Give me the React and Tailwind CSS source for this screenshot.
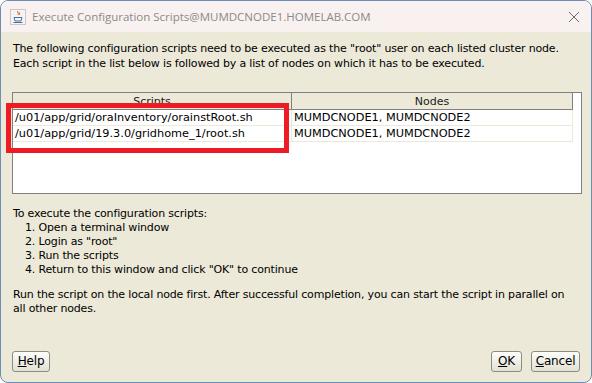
const rows = [
  ['/u01/app/grid/oraInventory/orainstRoot.sh', 'MUMDCNODE1, MUMDCNODE2'],
  ['/u01/app/grid/19.3.0/gridhome_1/root.sh', 'MUMDCNODE1, MUMDCNODE2'],
];

const steps = [
  'Open a terminal window',
  'Login as "root"',
  'Run the scripts',
  'Return to this window and click "OK" to continue',
];

function JavaIcon() {
  return (
    <svg width="16" height="16" viewBox="0 0 16 16">
      <rect x="0.5" y="0.5" width="15" height="15" fill="#f4f4f4" stroke="#c8c8c8" />
      <path d="M8 2c-1.5 1.5 1.5 2.5 0 4M9.5 3c-1 1 1 1.5 0 3" stroke="#e0701a" strokeWidth="1" fill="none" />
      <path d="M4 8.5h8l-1 3.5H5z" fill="none" stroke="#4a6fa5" strokeWidth="1" />
      <path d="M3.5 13.5h9" stroke="#4a6fa5" strokeWidth="1" />
    </svg>
  );
}

function Button({ children, className = '' }) {
  return (
    <button
      className={`h-[21px] rounded-[3px] border border-[#8c8c80] bg-gradient-to-b from-[#fdfdfb] to-[#e3e1d4] text-[12px] text-black ${className}`}
    >
      {children}
    </button>
  );
}

export default function App() {
  return (
    <div className="w-[592px] h-[383px] overflow-hidden rounded-[8px] border border-[#6d8fb6] bg-[#ece9d8] flex flex-col font-['DejaVu_Sans',sans-serif]">
      {/* title bar */}
      <div className="h-[31px] shrink-0 bg-[#f9f1ef] flex items-center pl-[9px] pr-[10px]">
        <JavaIcon />
        <span className="ml-[6px] text-[11.5px] text-[#8a8a8a] font-['Open_Sans',sans-serif]">
          Execute Configuration Scripts@MUMDCNODE1.HOMELAB.COM
        </span>
        <svg className="ml-auto mr-[1px]" width="12" height="12" viewBox="0 0 12 12">
          <path d="M1 1l10 10M11 1L1 11" stroke="#6a6a6a" strokeWidth="1" />
        </svg>
      </div>

      <div className="flex-1 flex flex-col px-[11px] text-[11px] leading-[15px] tracking-[-0.17px] whitespace-nowrap text-black">
        <p className="mt-[9px] ml-[1px]">
          The following configuration scripts need to be executed as the "root" user on each listed cluster node.
          <br />
          Each script in the list below is followed by a list of nodes on which it has to be executed.
        </p>

        {/* table */}
        <div className="relative mt-[21px] h-[102px] w-[570px] border border-[#808080] bg-white tracking-normal">
          <div className="flex h-[17px] w-[560px] bg-[#ece9d8] border-r border-b border-[#808080] text-[#1a1a1a]">
            <div className="w-[279px] border-r border-[#808080] flex items-center justify-center">Scripts</div>
            <div className="flex-1 flex items-center justify-center">Nodes</div>
          </div>
          {rows.map(([script, nodes]) => (
            <div key={script} className="flex h-[16px] w-[560px] border-b border-r border-[#ece9d8] text-[11.3px]">
              <div className="w-[279px] border-r border-[#ece9d8] pl-[2px] flex items-center">{script}</div>
              <div className="flex-1 pl-[2px] flex items-center">{nodes}</div>
            </div>
          ))}
          <div className="absolute left-[-7px] top-[10px] w-[283px] h-[50px] border-[5px] border-[#ed1c24]" />
        </div>

        <div className="mt-[13px] ml-[1px] leading-[14px]">
          <p>To execute the configuration scripts:</p>
          <ol className="pl-[12px]">
            {steps.map((s, i) => (
              <li key={s}>{i + 1}. {s}</li>
            ))}
          </ol>
          <p className="mt-[11px]">
            Run the script on the local node first. After successful completion, you can start the script in parallel on
            <br />
            all other nodes.
          </p>
        </div>

        <div className="mt-auto mb-[10px] flex items-center">
          <Button className="w-[38px]"><u>H</u>elp</Button>
          <Button className="ml-auto w-[31px]"><u>O</u>K</Button>
          <Button className="ml-[9px] w-[49px]"><u>C</u>ancel</Button>
        </div>
      </div>
    </div>
  );
}
